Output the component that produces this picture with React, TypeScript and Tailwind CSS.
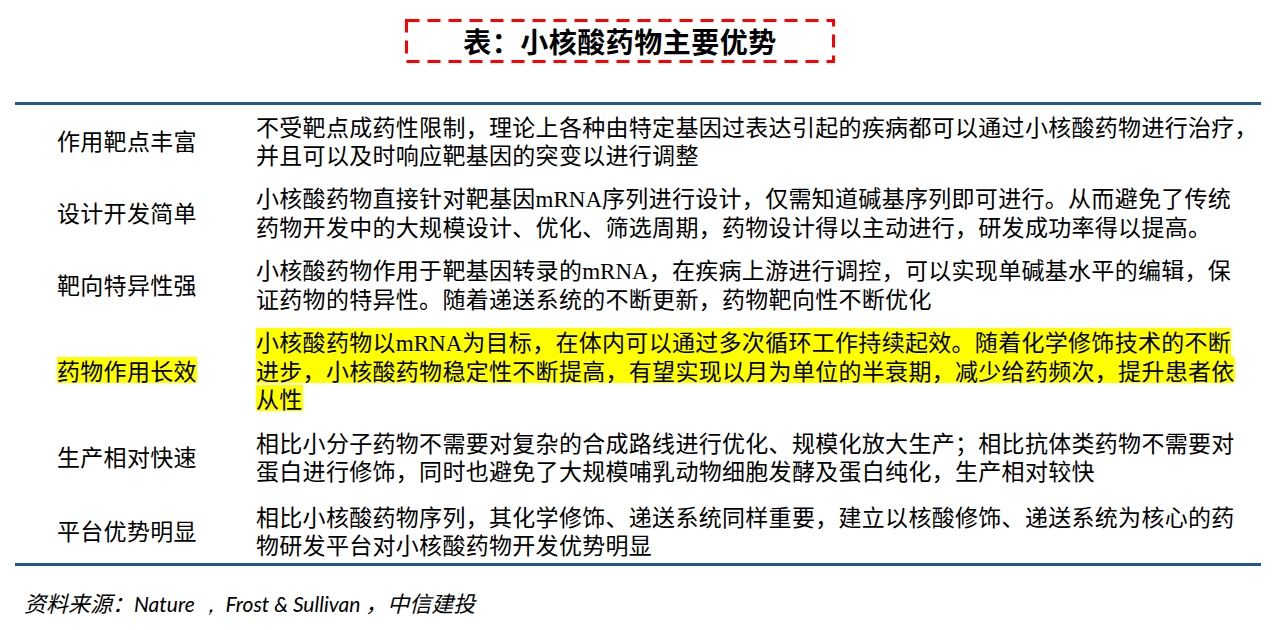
import React from "react";

type Seg = string | { serif: string };

const rows: { label: string; lines: Seg[][]; hl?: boolean; gap: number }[] = [
  {
    label: "作用靶点丰富",
    gap: 0,
    lines: [
      ["不受靶点成药性限制，理论上各种由特定基因过表达引起的疾病都可以通过小核酸药物进行治疗，"],
      ["并且可以及时响应靶基因的突变以进行调整"],
    ],
  },
  {
    label: "设计开发简单",
    gap: 16,
    lines: [
      ["小核酸药物直接针对靶基因", { serif: "mRNA" }, "序列进行设计，仅需知道碱基序列即可进行。从而避免了传统"],
      ["药物开发中的大规模设计、优化、筛选周期，药物设计得以主动进行，研发成功率得以提高。"],
    ],
  },
  {
    label: "靶向特异性强",
    gap: 16,
    lines: [
      ["小核酸药物作用于靶基因转录的", { serif: "mRNA" }, "，在疾病上游进行调控，可以实现单碱基水平的编辑，保"],
      ["证药物的特异性。随着递送系统的不断更新，药物靶向性不断优化"],
    ],
  },
  {
    label: "药物作用长效",
    gap: 16,
    hl: true,
    lines: [
      ["小核酸药物以", { serif: "mRNA" }, "为目标，在体内可以通过多次循环工作持续起效。随着化学修饰技术的不断"],
      ["进步，小核酸药物稳定性不断提高，有望实现以月为单位的半衰期，减少给药频次，提升患者依"],
      ["从性"],
    ],
  },
  {
    label: "生产相对快速",
    gap: 16,
    lines: [
      ["相比小分子药物不需要对复杂的合成路线进行优化、规模化放大生产；相比抗体类药物不需要对"],
      ["蛋白进行修饰，同时也避免了大规模哺乳动物细胞发酵及蛋白纯化，生产相对较快"],
    ],
  },
  {
    label: "平台优势明显",
    gap: 18,
    lines: [
      ["相比小核酸药物序列，其化学修饰、递送系统同样重要，建立以核酸修饰、递送系统为核心的药"],
      ["物研发平台对小核酸药物开发优势明显"],
    ],
  },
];

function Line({ segs, hl }: { segs: Seg[]; hl?: boolean }) {
  const content = segs.map((s, i) =>
    typeof s === "string" ? (
      <React.Fragment key={i}>{s}</React.Fragment>
    ) : (
      <span key={i} className="font-['Liberation_Serif',serif] tracking-normal">
        {s.serif}
      </span>
    )
  );
  return (
    <div className="h-[28px] flex items-center whitespace-nowrap">
      <span className={hl ? "bg-[#ffff00] leading-[26px]" : "leading-[28px]"}>{content}</span>
    </div>
  );
}

export default function App() {
  return (
    <div className="w-[1280px] h-[630px] bg-white overflow-hidden text-black font-['Noto_Sans_CJK_SC',sans-serif]">
      <div className="pt-[19px]">
        <div className="relative ml-[405px] w-[430px] h-[44px] flex items-center justify-center">
          <svg className="absolute inset-0" width="430" height="44" viewBox="0 0 430 44">
            <rect x="1.5" y="1.5" width="427" height="41" fill="none" stroke="#ff0000" strokeWidth="3" strokeDasharray="13 8" />
          </svg>
          <span className="relative text-[28px] font-bold leading-none tracking-[0.5px]">表：小核酸药物主要优势</span>
        </div>
      </div>

      <div className="mt-[39px] ml-[15px] w-[1246px] border-t-[3px] border-b-[3px] border-[#1f5a8a] pt-[7px] pb-[5px]">
        {rows.map((r, i) => (
          <div
            key={i}
            className="grid grid-cols-[241px_1fr] text-[23px] tracking-[0.3px]"
            style={{ marginTop: r.gap }}
          >
            <div className="pl-[42px] flex items-center">
              <span className={r.hl ? "bg-[#ffff00] leading-[26px] whitespace-nowrap" : "leading-[28px] whitespace-nowrap"}>
                {r.label}
              </span>
            </div>
            <div className="flex flex-col">
              {r.lines.map((l, j) => (
                <Line key={j} segs={l} hl={r.hl} />
              ))}
            </div>
          </div>
        ))}
      </div>

      <div className="mt-[22px] pl-[24px] text-[22px] leading-[28px] italic whitespace-nowrap">
        资料来源：<span className="font-['Lato',sans-serif] text-[21px]">Nature ，&nbsp;Frost &amp; Sullivan </span>，中信建投
      </div>
    </div>
  );
}
